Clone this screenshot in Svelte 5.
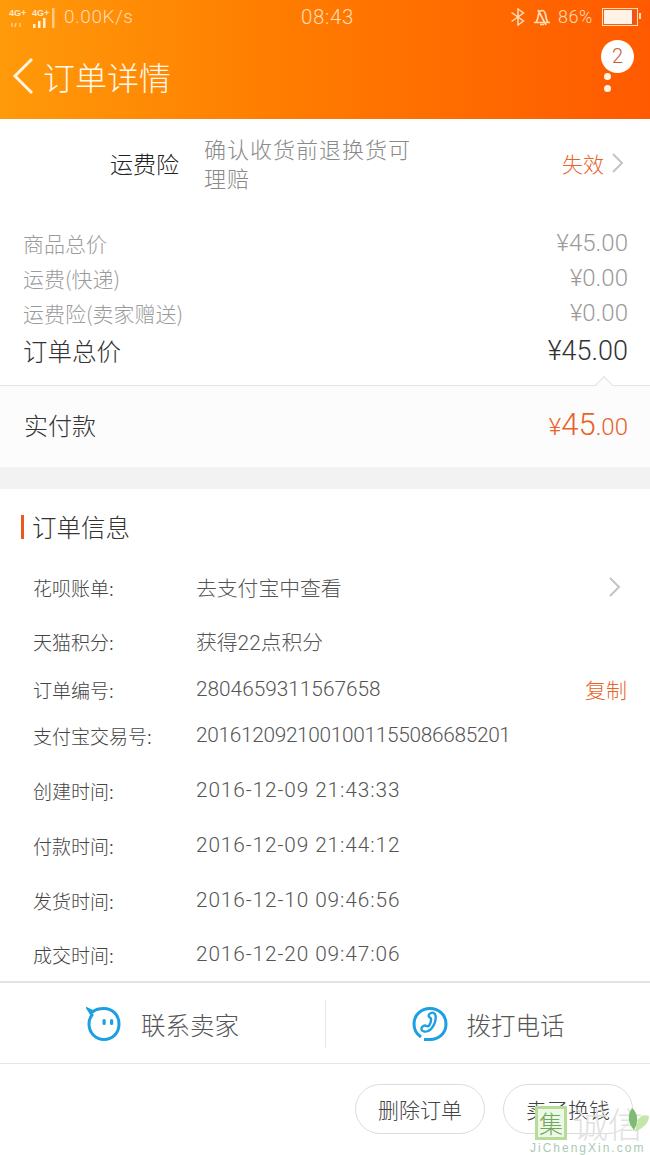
<script>
  const charges = [
    { label: '商品总价', price: '¥45.00' },
    { label: '运费(快递)', price: '¥0.00' },
    { label: '运费险(卖家赠送)', price: '¥0.00' }
  ];

  const details = [
    { label: '花呗账单:', value: '去支付宝中查看', chevron: true },
    { label: '天猫积分:', value: '获得22点积分' },
    { label: '订单编号:', value: '2804659311567658', copy: true },
    { label: '支付宝交易号:', value: '2016120921001001155086685201', kind: 'long' },
    { label: '创建时间:', value: '2016-12-09 21:43:33', kind: 'date' },
    { label: '付款时间:', value: '2016-12-09 21:44:12', kind: 'date' },
    { label: '发货时间:', value: '2016-12-10 09:46:56', kind: 'date' },
    { label: '成交时间:', value: '2016-12-20 09:47:06', kind: 'date' }
  ];
</script>

<div class="page">
  <header class="topbar">
    <div class="status">
      <div class="status-left">
        <svg class="signal" viewBox="0 0 50 26" width="50" height="26">
          <text x="0" y="12" class="net">4G+</text>
          <text x="23" y="12" class="net">4G+</text>
          <path d="M3 19v4M6 23l1-4M11 19v4" stroke="#ffc98a" stroke-width="1.500" fill="none" />
          <rect x="24" y="20" width="2.500" height="4" fill="#fff0d8" />
          <rect x="29" y="17" width="2.500" height="7" fill="#fff0d8" />
          <rect x="34" y="14" width="2.500" height="10" fill="#fff0d8" />
          <rect x="43" y="4" width="2.500" height="20" fill="#ffc98a" />
        </svg>
        <span>0.00K/s</span>
      </div>
      <span class="clock">08:43</span>
      <div class="status-right">
        <svg viewBox="0 0 16 18" width="16" height="18" fill="none" stroke="#ffdcb8" stroke-width="1.500">
          <path d="M1.500 4.500 13.500 13 8 17V1l5.500 4L1.500 13.500" />
        </svg>
        <svg viewBox="0 0 18 18" width="18" height="18" fill="none" stroke="#ffdcb8" stroke-width="1.700">
          <path d="M1 14.500h16M3 14.500c1.500-2 2-5 2.500-8C6 4 7.500 2.500 9 2.500S12 4 12.500 6.500c.5 3 1 6 2.500 8M5 2l8 15M7 16.500h4" />
        </svg>
        <span class="percent">86%</span>
        <div class="battery"><i></i></div>
      </div>
    </div>
    <div class="titlebar">
      <div class="title-left">
        <svg viewBox="0 0 22 38" width="22" height="38" fill="none" stroke="#fff3e2" stroke-width="3">
          <path d="M20 2 3 19l17 17" />
        </svg>
        <h1>订单详情</h1>
      </div>
      <div class="more">
        <span class="badge">2</span>
        <i></i>
        <i></i>
      </div>
    </div>
  </header>

  <section class="insurance">
    <span class="ins-name">运费险</span>
    <p>确认收货前退换货可<br />理赔</p>
    <span class="ins-state">失效</span>
    <svg class="chevron" viewBox="0 0 14 22" width="14" height="22" fill="none" stroke="#c4c4c4" stroke-width="2">
      <path d="m2 2 9 9-9 9" />
    </svg>
  </section>

  <section class="charges">
    {#each charges as charge}
      <div class="charge">
        <span>{charge.label}</span>
        <span class="num">{charge.price}</span>
      </div>
    {/each}
    <div class="charge total">
      <span>订单总价</span>
      <span class="num">¥45.00</span>
    </div>
  </section>

  <section class="paid">
    <span class="notch"></span>
    <span>实付款</span>
    <span class="paid-price"><small>¥</small>45<small>.00</small></span>
  </section>

  <div class="spacer"></div>

  <section class="info">
    <h2>订单信息</h2>
    <div class="rows">
      {#each details as row}
        <div class="row">
          <span class="label">{row.label}</span>
          <span class="value {row.kind ?? ''}">{row.value}</span>
          {#if row.chevron}
            <svg class="chevron" viewBox="0 0 14 22" width="14" height="22" fill="none" stroke="#c4c4c4" stroke-width="2">
              <path d="m2 2 9 9-9 9" />
            </svg>
          {/if}
          {#if row.copy}
            <span class="copy">复制</span>
          {/if}
        </div>
      {/each}
    </div>
  </section>

  <section class="contact">
    <div class="contact-item">
      <svg viewBox="0 0 36 36" width="36" height="36" fill="none" stroke="#1d9fe3" stroke-width="3">
        <path d="M7 5.500C10 3 14 2.500 18 2.500c8.500 0 15 6.500 15 15.500s-6.500 15.500-15 15.500S3 26.500 3 18c0-3.500 1-6.500 3-9L2.500 3.500Z" />
        <rect x="16.500" y="13" width="3.200" height="6" rx="1.600" fill="#1d9fe3" stroke="none" />
        <rect x="24" y="13" width="3.200" height="6" rx="1.600" fill="#1d9fe3" stroke="none" />
      </svg>
      <span>联系卖家</span>
    </div>
    <div class="contact-item">
      <svg viewBox="0 0 36 36" width="36" height="36" fill="none" stroke="#1d9fe3" stroke-width="3">
        <path d="M9 31C4.500 28 2 23.500 2 18 2 9 9 2.500 18 2.500S34 9 34 18s-7 15.500-16 15.500h-6" />
        <path d="M19 7c2-1 4 0 4.500 2.500 1 5-2 13-7.500 15.500-3 1.200-6 .5-6.500-1.500-.5-2 1.500-4 3.500-4 1.500 0 2 1.500 3.500.5 1.500-1.200 2.800-5 2.500-7-.2-1.500-2-1.500-2.300-3-.2-1 .8-2.300 2.300-3Z" stroke-width="2.400" />
      </svg>
      <span>拨打电话</span>
    </div>
  </section>

  <footer class="actions">
    <button>删除订单</button>
    <button>卖了换钱</button>
  </footer>

  <div class="watermark">
    <div class="mark-top">
      <span class="mark-box">集</span>
      <span class="mark-name">诚信</span>
      <svg class="mark-leaf" viewBox="0 0 22 24" width="22" height="24">
        <path d="M8 24C16 20 22 15 22 8c-5-2-9 0-11 4Z" fill="#c4e6a8" />
        <path d="M7 22C1 16 0 7 5 0c6 5 7 14 2 22Z" fill="#7fbb72" />
      </svg>
    </div>
    <span class="mark-url">JiChengXin.com</span>
  </div>
</div>

<style>
  :global(body) {
    margin: 0;
    background: #fff;
  }
  .page {
    position: relative;
    width: 650px;
    height: 1155px;
    overflow: hidden;
    font-family: "Noto Sans CJK SC", "Noto Sans", sans-serif;
    font-weight: 300;
    color: #333;
    background: #fff;
  }
  .num,
  .paid-price,
  .value,
  .status,
  .badge {
    font-family: Roboto, "Noto Sans CJK SC", sans-serif;
    font-weight: 300;
  }
  .topbar {
    height: 119px;
    background: linear-gradient(90deg, #ff9a0a 0%, #ff7b00 45%, #ff5a00 100%);
    color: #ffdcb8;
  }
  .status {
    display: grid;
    grid-template-columns: 1fr auto 1fr;
    align-items: center;
    height: 33px;
    padding: 0 4px 0 9px;
    font-size: 19px;
    letter-spacing: 0.600px;
  }
  .status-left,
  .status-right {
    display: flex;
    align-items: center;
  }
  .status-left {
    gap: 5px;
  }
  .net {
    font-family: "Liberation Sans", sans-serif;
    font-size: 9px;
    font-weight: 700;
    letter-spacing: 0;
    fill: #ffe9cc;
  }
  .clock {
    font-size: 20.500px;
  }
  .status-right {
    justify-content: flex-end;
    gap: 7px;
  }
  .percent {
    font-size: 18px;
    margin-right: 2px;
  }
  .battery {
    position: relative;
    display: flex;
    width: 32px;
    height: 14px;
    border: 1px solid #ffdcb8;
    margin-right: 8px;
    padding: 1px;
  }
  .battery::after {
    content: "";
    position: absolute;
    right: -4px;
    top: 4px;
    width: 2px;
    height: 6px;
    background: #ffdcb8;
  }
  .battery i {
    display: block;
    width: 86%;
    height: 100%;
    background: #fff2e6;
    box-shadow: 4px 0 0 #f0521a;
  }
  .titlebar {
    display: flex;
    align-items: center;
    justify-content: space-between;
    height: 86px;
    padding: 0 16px 0 12px;
  }
  .title-left {
    display: flex;
    align-items: center;
    gap: 9px;
  }
  h1 {
    margin: 0;
    font-size: 32px;
    font-weight: 300;
    line-height: 1;
    color: #fff8ec;
  }
  .more {
    position: relative;
    display: flex;
    flex-direction: column;
    align-items: center;
    gap: 5px;
    width: 10px;
    margin-right: 22px;
    padding-top: 12px;
  }
  .more i {
    width: 7px;
    height: 7px;
    border-radius: 50%;
    background: #fff3e2;
  }
  .badge {
    position: absolute;
    top: -21px;
    left: -1px;
    width: 33px;
    height: 33px;
    border-radius: 50%;
    background: #fff;
    color: #c9603a;
    font-size: 20px;
    line-height: 33px;
    text-align: center;
  }
  .insurance {
    display: grid;
    grid-template-columns: 94px 358px 1fr auto;
    align-items: center;
    height: 88px;
    padding: 0 28px 8px 110px;
  }
  .ins-name {
    font-size: 23px;
    color: #222;
  }
  .insurance p {
    margin: 0;
    font-size: 22px;
    line-height: 29px;
    color: #8a8a8a;
    letter-spacing: 1px;
  }
  .ins-state {
    font-size: 21px;
    color: #e8632a;
    white-space: nowrap;
  }
  .chevron {
    display: block;
  }
  .insurance .chevron {
    margin-left: 7px;
  }
  .charges {
    display: grid;
    grid-template-rows: 36px 34px 35px 41px;
    height: 171px;
    padding: 10px 22px 14px 23px;
    box-sizing: border-box;
    border-bottom: 1px solid #e2e2e2;
  }
  .charge {
    display: flex;
    align-items: center;
    justify-content: space-between;
    font-size: 21px;
    color: #9b9b9b;
  }
  .charge .num {
    font-size: 24px;
  }
  .total {
    font-size: 24.500px;
    color: #333;
  }
  .total .num {
    font-size: 27px;
  }
  .paid {
    position: relative;
    display: flex;
    align-items: center;
    justify-content: space-between;
    height: 76px;
    padding: 0 22px 5px 24px;
    background: #fcfcfc;
    font-size: 24px;
  }
  .notch {
    position: absolute;
    top: -7px;
    right: 39px;
    width: 13px;
    height: 13px;
    background: #fcfcfc;
    border-left: 1px solid #e2e2e2;
    border-top: 1px solid #e2e2e2;
    transform: rotate(45deg);
  }
  .paid-price {
    color: #e8632a;
    font-size: 31px;
  }
  .paid-price small {
    font-size: 24px;
  }
  .spacer {
    height: 22px;
    background: #f2f2f2;
  }
  .info {
    height: 492px;
    box-sizing: border-box;
    padding-top: 26px;
  }
  h2 {
    display: flex;
    align-items: center;
    height: 24px;
    margin: 0 0 0 21px;
    padding-left: 8px;
    border-left: 3px solid #e8591c;
    font-size: 24.500px;
    font-weight: 300;
    line-height: 1;
  }
  .rows {
    display: grid;
    grid-template-rows: 54px 54px 42px 50px 60px 50px 60px 48px;
    margin-top: 21px;
    padding: 0 23px 0 33px;
  }
  .row {
    display: grid;
    grid-template-columns: 163px 1fr auto;
    align-items: center;
  }
  .label {
    font-size: 19px;
    color: #444;
    white-space: nowrap;
  }
  .value {
    font-size: 20.800px;
    color: #555;
    white-space: nowrap;
  }
  .value.long {
    letter-spacing: -0.300px;
  }
  .value.date {
    letter-spacing: 0.900px;
  }
  .row .chevron {
    margin-right: 5px;
  }
  .copy {
    font-size: 21px;
    color: #e8632a;
  }
  .contact {
    display: grid;
    grid-template-columns: 1fr 1fr;
    height: 80px;
    border-top: 2px solid #e2e2e2;
    border-bottom: 1px solid #e6e6e6;
  }
  .contact-item {
    display: flex;
    align-items: center;
    justify-content: center;
    gap: 19px;
    margin: 17px 0 15px;
    font-size: 24.500px;
    color: #555;
  }
  .contact-item + .contact-item {
    border-left: 1px solid #e8e8e8;
  }
  .actions {
    display: flex;
    justify-content: flex-end;
    gap: 18px;
    padding: 20px 17px 0 0;
  }
  button {
    width: 130px;
    height: 50px;
    border: 1px solid #dcdcdc;
    border-radius: 25px;
    background: #fff;
    font: inherit;
    font-size: 21px;
    color: #444;
    padding: 0;
  }
  .watermark {
    position: absolute;
    right: 0;
    top: 1107px;
    width: 120px;
    pointer-events: none;
  }
  .mark-top {
    display: flex;
    align-items: center;
    gap: 6px;
    padding-left: 5px;
    height: 32px;
  }
  .mark-box {
    flex: none;
    width: 26px;
    height: 28px;
    border: 3px solid #b5dc9a;
    background: #eef8e6;
    color: #6fa85a;
    font-size: 24px;
    line-height: 28px;
    text-align: center;
  }
  .mark-name {
    font-size: 35px;
    line-height: 32px;
    color: #dfe2df;
    white-space: nowrap;
  }
  .mark-leaf {
    position: absolute;
    right: 1px;
    top: 1px;
  }
  .mark-url {
    display: block;
    margin-top: 3px;
    font-family: "Liberation Sans", sans-serif;
    font-size: 12px;
    line-height: 12px;
    letter-spacing: 2px;
    color: #a9c9b5;
    white-space: nowrap;
  }
</style>
